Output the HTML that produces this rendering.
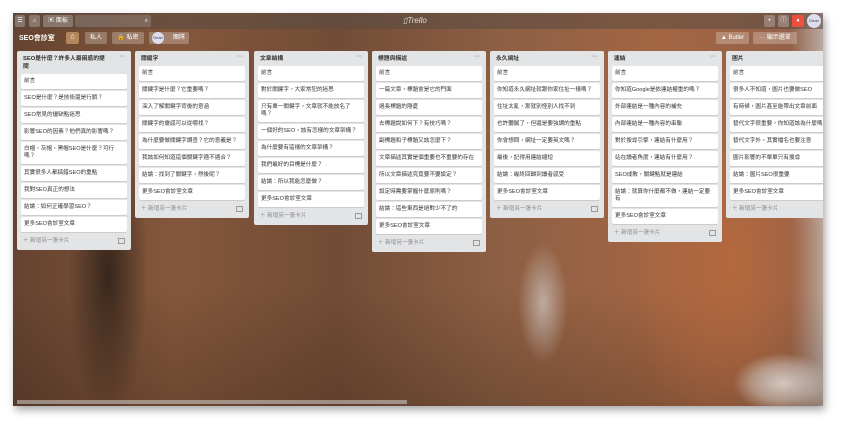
<!DOCTYPE html>
<html><head><meta charset="utf-8"><style>
*{margin:0;padding:0;box-sizing:border-box}
body{width:850px;height:434px;background:#fff;position:relative;overflow:hidden;font-family:"Liberation Sans","Noto Sans CJK TC",sans-serif}
#board{position:absolute;left:13px;top:13px;width:810px;height:393px;overflow:hidden;box-shadow:2px 4px 8px rgba(0,0,0,.35);
background:
radial-gradient(ellipse 50px 30px at 770px 370px,rgba(215,205,198,.95) 0%,rgba(200,190,182,.6) 60%,rgba(200,190,182,0) 100%),
radial-gradient(ellipse 25px 60px at 530px 290px,rgba(200,190,184,.8) 0%,rgba(200,190,184,0) 100%),
radial-gradient(ellipse 40px 150px at 95px 260px,rgba(40,28,20,.8) 0%,rgba(40,28,20,0) 100%),
radial-gradient(ellipse 100px 200px at 720px 250px,rgba(185,105,60,.85) 0%,rgba(185,105,60,0) 100%),
linear-gradient(180deg,rgba(0,0,0,0) 70%,rgba(40,25,15,.25) 100%),
linear-gradient(90deg,#644330 0%,#84573c 20%,#714c36 40%,#8d5f44 60%,#a36643 80%,#956249 96%,#b9aaa2 100%);}
#top{position:absolute;left:0;top:0;width:810px;height:16px;background:rgba(90,75,65,.55)}
.b{position:absolute;background:rgba(255,255,255,.25);border-radius:2px;height:12px;top:2px;color:#fff;font-size:6px;line-height:12px;text-align:center}
#bh{position:absolute;left:0;top:17px;width:810px;height:18px}
.list{position:absolute;top:38px;width:114px;background:#e2e4e6;border-radius:2px;font-size:5.6px;color:#333;padding:0 4px}
.lt{font-weight:bold;padding:4px 2px 3px;font-size:5.8px;position:relative;line-height:8px}
.lt:after{content:"···";position:absolute;right:2px;top:2px;color:#888}
.c{background:#fff;border-radius:2px;margin-bottom:2px;padding:4px 3px;line-height:7px;box-shadow:0 1px 0 #ccc;min-height:15px}
.f{color:#888;padding:3px 2px 5px;height:16px;line-height:8px;position:relative}
.f:after{content:"";position:absolute;right:2px;top:4px;width:5px;height:4px;border:1px solid #999}
#sb{position:absolute;left:4px;top:387px;width:390px;height:4px;background:rgba(220,220,220,.5)}
</style></head><body>
<div id="board">
<div id="top">
<div class="b" style="left:2px;width:10px">☰</div>
<div class="b" style="left:16px;width:11px">⌂</div>
<div class="b" style="left:30px;width:30px">▣ 面板</div>
<div class="b" style="left:62px;width:76px;text-align:right;padding-right:3px;background:rgba(255,255,255,.15)">⌕</div>
<div style="position:absolute;left:390px;top:3px;color:#ddd;font-size:8px;font-style:italic">▯Trello</div>
<div class="b" style="left:751px;width:11px">+</div>
<div class="b" style="left:765px;width:11px">ⓘ</div>
<div class="b" style="left:779px;width:12px;background:#e9503e">♦</div>
<div style="position:absolute;left:794px;top:1px;width:14px;height:14px;border-radius:50%;background:#dde;color:#335;font-size:4px;line-height:14px;text-align:center">Dean</div>
</div>
<div id="bh">
<div style="position:absolute;left:6px;top:3px;color:#fff;font-weight:bold;font-size:7px">SEO會診室</div>
<div class="b" style="left:53px;width:13px;background:rgba(210,160,110,.7)">☆</div>
<div class="b" style="left:72px;width:22px">私人</div>
<div class="b" style="left:99px;width:32px">🔒 私密</div>
<div class="b" style="left:136px;width:40px;text-align:right;padding-right:4px">團隊</div>
<div style="position:absolute;left:139px;top:2px;width:12px;height:12px;border-radius:50%;background:#dde;font-size:4px;line-height:12px;text-align:center;color:#335">Dean</div>
<div class="b" style="left:703px;width:33px">▲ Butler</div>
<div class="b" style="left:740px;width:44px">··· 顯示選單</div>
</div>

<div class="list" style="left:4px"><div class="lt">SEO是什麼？許多人最困惑的提<br>問</div>
<div class="c">前言</div><div class="c">SEO是什麼？是技術還是行銷？</div><div class="c">SEO常見的優缺點迷思</div><div class="c">影響SEO的因素？他們真的影響嗎？</div><div class="c">白帽、灰帽、黑帽SEO是什麼？可行嗎？</div><div class="c">其實很多人都搞錯SEO的重點</div><div class="c">我對SEO真正的想法</div><div class="c">結論：如何正確學習SEO？</div><div class="c">更多SEO會診室文章</div><div class="f">＋ 新增另一張卡片</div></div>

<div class="list" style="left:122px"><div class="lt">關鍵字</div>
<div class="c">前言</div><div class="c">關鍵字是什麼？它重要嗎？</div><div class="c">深入了解關鍵字背後的意涵</div><div class="c">關鍵字的靈感可以從哪找？</div><div class="c">為什麼要做關鍵字調查？它的意義是？</div><div class="c">我該如何知道這個關鍵字適不適合？</div><div class="c">結論：找到了關鍵字，然後呢？</div><div class="c">更多SEO會診室文章</div><div class="f">＋ 新增另一張卡片</div></div>

<div class="list" style="left:241px"><div class="lt">文章結構</div>
<div class="c">前言</div><div class="c">對於關鍵字，大家常犯的迷思</div><div class="c">只有單一關鍵字，文章就不能放名了嗎？</div><div class="c">一個好的SEO，該有怎樣的文章架構？</div><div class="c">為什麼要有這樣的文章架構？</div><div class="c">我們最好的目標是什麼？</div><div class="c">結論：所以我能怎麼做？</div><div class="c">更多SEO會診室文章</div><div class="f">＋ 新增另一張卡片</div></div>

<div class="list" style="left:359px"><div class="lt">標題與描述</div>
<div class="c">前言</div><div class="c">一篇文章，標題會是它的門面</div><div class="c">過長標題的隱憂</div><div class="c">去標題說如何下？有技巧嗎？</div><div class="c">副標題和子標題又該怎麼下？</div><div class="c">文章描述其實是個重要也不重要的存在</div><div class="c">所以文章描述究竟要不要設定？</div><div class="c">設定時需要掌握什麼原則嗎？</div><div class="c">結論：這些東西是絕對少不了的</div><div class="c">更多SEO會診室文章</div><div class="f">＋ 新增另一張卡片</div></div>

<div class="list" style="left:477px"><div class="lt">永久網址</div>
<div class="c">前言</div><div class="c">你知道永久網址就跟你家住址一樣嗎？</div><div class="c">住址太亂，那就別怪別人找不到</div><div class="c">也許聽膩了，但還是要強調的重點</div><div class="c">你會想問，網址一定要英文嗎？</div><div class="c">最後，記得用連結縮短</div><div class="c">結論：最終回歸到讀者感受</div><div class="c">更多SEO會診室文章</div><div class="f">＋ 新增另一張卡片</div></div>

<div class="list" style="left:595px"><div class="lt">連結</div>
<div class="c">前言</div><div class="c">你知道Google是依連結權重的嗎？</div><div class="c">外部連結是一種內容的補充</div><div class="c">內部連結是一種內容的串聯</div><div class="c">對於搜尋引擎，連結有什麼用？</div><div class="c">站在讀者角度，連結有什麼用？</div><div class="c">SEO成敗，關鍵點就是連結</div><div class="c">結論：就算你什麼都不做，連結一定要有</div><div class="c">更多SEO會診室文章</div><div class="f">＋ 新增另一張卡片</div></div>

<div class="list" style="left:713px"><div class="lt">圖片</div>
<div class="c">前言</div><div class="c">很多人不知道，圖片也要做SEO</div><div class="c">有時候，圖片甚至能帶出文章前面</div><div class="c">替代文字很重要，你知道該為什麼嗎？</div><div class="c">替代文字外，其實檔名也要注意</div><div class="c">圖片影響的不單單只有搜尋</div><div class="c">結論：圖片SEO很重要</div><div class="c">更多SEO會診室文章</div><div class="f">＋ 新增另一張卡片</div></div>
<div id="sb"></div>
</div>
</body></html>
